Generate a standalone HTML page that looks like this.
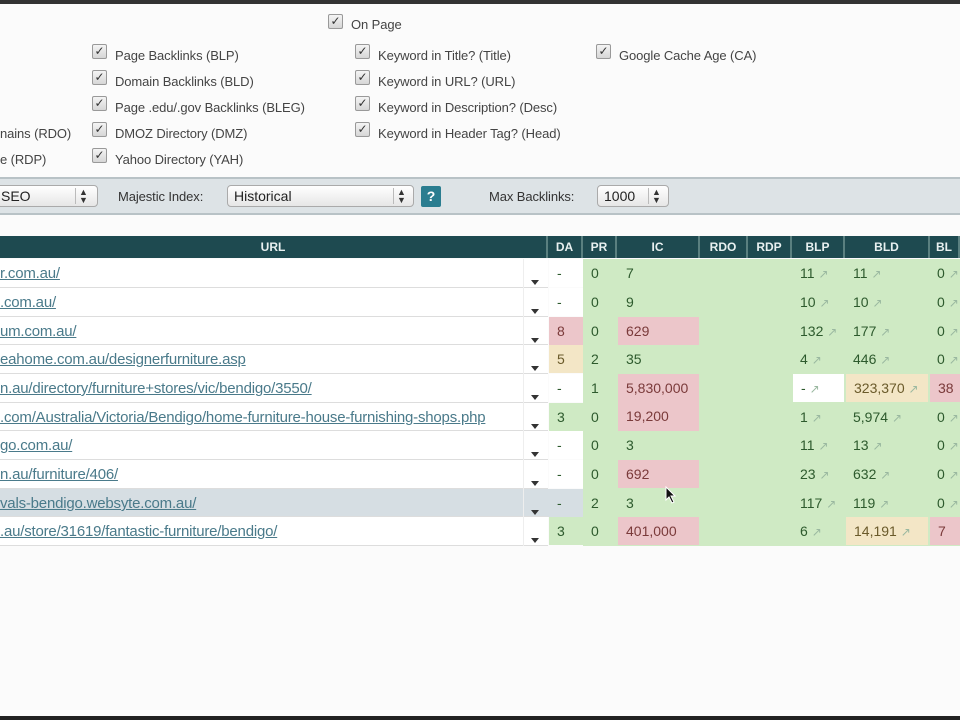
<!DOCTYPE html>
<html><head><meta charset="utf-8"><style>
*{margin:0;padding:0;box-sizing:border-box}
body{width:960px;height:720px;overflow:hidden;background:#fbfbfb;font-family:"Liberation Sans",sans-serif;position:relative;color:#333}
.a{position:absolute;white-space:nowrap}
.cb{position:absolute;width:15px;height:15px;border:1px solid #999;border-radius:2px;background:linear-gradient(#f4f4f4,#d6d6d6);font-size:12px;line-height:13px;text-align:center;color:#333}
.lb{position:absolute;font-size:13px;color:#444;white-space:nowrap;letter-spacing:-0.1px}
.c{position:absolute;height:28px;font-size:14px;line-height:28px;padding-left:8px;color:#2d5a2d;white-space:nowrap}
.c i{font-style:normal;color:#9ab8a0;font-size:12px}
.h{position:absolute;top:236px;height:22px;background:#1e4a50;color:#e8f0f0;font-weight:bold;font-size:12px;line-height:22px;text-align:center;border-right:2px solid #5a8080}
.u{color:#4a7a8a;text-decoration:underline;font-size:15px;letter-spacing:-0.2px}
.ar{position:absolute;left:531px;width:0;height:0;border-left:4px solid transparent;border-right:4px solid transparent;border-top:5px solid #333}
.g{background:#cfeac4}.p{background:#ecc6ca}.y{background:#f3e6c6}.w{background:#fff}
.sel{position:absolute;top:185px;height:22px;border:1px solid #aaa;border-radius:4px;background:linear-gradient(#fff,#e6e6e6);font-size:14px;line-height:20px;padding-left:6px;color:#222}
.sp{position:absolute;top:2px;width:16px;height:16px;border-left:1px solid #bbb;font-size:9px;line-height:8px;text-align:center;color:#333}
</style></head><body>
<div class="a" style="left:0;top:0;width:960px;height:4px;background:#333"></div>
<div class="a" style="left:0;top:716px;width:960px;height:4px;background:#222"></div>

<div class="cb" style="left:328px;top:14px">✓</div><div class="lb" style="left:351px;top:17px">On Page</div>
<div class="cb" style="left:92px;top:44px">✓</div><div class="lb" style="left:115px;top:48px">Page Backlinks (BLP)</div>
<div class="cb" style="left:92px;top:70px">✓</div><div class="lb" style="left:115px;top:74px">Domain Backlinks (BLD)</div>
<div class="cb" style="left:92px;top:96px">✓</div><div class="lb" style="left:115px;top:100px">Page .edu/.gov Backlinks (BLEG)</div>
<div class="cb" style="left:92px;top:122px">✓</div><div class="lb" style="left:115px;top:126px">DMOZ Directory (DMZ)</div>
<div class="cb" style="left:92px;top:148px">✓</div><div class="lb" style="left:115px;top:152px">Yahoo Directory (YAH)</div>
<div class="lb" style="left:0;top:126px">nains (RDO)</div>
<div class="lb" style="left:0;top:152px">e (RDP)</div>
<div class="cb" style="left:355px;top:44px">✓</div><div class="lb" style="left:378px;top:48px">Keyword in Title? (Title)</div>
<div class="cb" style="left:355px;top:70px">✓</div><div class="lb" style="left:378px;top:74px">Keyword in URL? (URL)</div>
<div class="cb" style="left:355px;top:96px">✓</div><div class="lb" style="left:378px;top:100px">Keyword in Description? (Desc)</div>
<div class="cb" style="left:355px;top:122px">✓</div><div class="lb" style="left:378px;top:126px">Keyword in Header Tag? (Head)</div>
<div class="cb" style="left:596px;top:44px">✓</div><div class="lb" style="left:619px;top:48px">Google Cache Age (CA)</div>

<div class="a" style="left:0;top:177px;width:960px;height:38px;background:#dde3e6;border-top:2px solid #b8c2c6;border-bottom:2px solid #b8c2c6"></div>
<div class="sel" style="left:-6px;width:104px">SEO<div class="sp" style="left:80px">▲<br>▼</div></div>
<div class="lb" style="left:118px;top:189px;color:#333">Majestic Index:</div>
<div class="sel" style="left:227px;width:187px">Historical<div class="sp" style="left:165px">▲<br>▼</div></div>
<div class="a" style="left:421px;top:186px;width:20px;height:21px;background:#2a7d90;border-radius:2px;color:#fff;font-weight:bold;font-size:14px;text-align:center;line-height:21px">?</div>
<div class="lb" style="left:489px;top:189px;color:#333">Max Backlinks:</div>
<div class="sel" style="left:597px;width:72px">1000<div class="sp" style="left:50px">▲<br>▼</div></div>

<div class="h" style="left:0;width:548px">URL</div>
<div class="h" style="left:548px;width:35px">DA</div>
<div class="h" style="left:583px;width:34px">PR</div>
<div class="h" style="left:617px;width:83px">IC</div>
<div class="h" style="left:700px;width:48px">RDO</div>
<div class="h" style="left:748px;width:44px">RDP</div>
<div class="h" style="left:792px;width:53px">BLP</div>
<div class="h" style="left:845px;width:85px">BLD</div>
<div class="h" style="left:930px;width:30px;text-align:left;padding-left:6px">BL</div>

<div class="a g" style="left:583px;top:259px;width:377px;height:287px"></div>
<div class="a w" style="left:0;top:259px;width:548px;height:287px"></div>
<div class="a" style="left:0;top:489px;width:583px;height:28px;background:#d6dee3"></div>

<div class="a" style="left:0;top:287px;width:548px;height:1px;background:#ddd"></div>
<div class="a" style="left:0;top:316px;width:548px;height:1px;background:#ddd"></div>
<div class="a" style="left:0;top:344px;width:548px;height:1px;background:#ddd"></div>
<div class="a" style="left:0;top:373px;width:548px;height:1px;background:#ddd"></div>
<div class="a" style="left:0;top:402px;width:548px;height:1px;background:#ddd"></div>
<div class="a" style="left:0;top:430px;width:548px;height:1px;background:#ddd"></div>
<div class="a" style="left:0;top:459px;width:548px;height:1px;background:#ddd"></div>
<div class="a" style="left:0;top:488px;width:548px;height:1px;background:#ddd"></div>
<div class="a" style="left:0;top:516px;width:548px;height:1px;background:#ddd"></div>
<div class="a" style="left:0;top:545px;width:548px;height:1px;background:#ddd"></div>
<div class="a" style="left:523px;top:259px;width:1px;height:287px;background:#eee"></div>

<div class="c" style="left:0;top:259px;padding-left:0"><span class="u">r.com.au/</span></div>
<div class="c" style="left:0;top:288px;padding-left:0"><span class="u">.com.au/</span></div>
<div class="c" style="left:0;top:317px;padding-left:0"><span class="u">um.com.au/</span></div>
<div class="c" style="left:0;top:345px;padding-left:0"><span class="u">eahome.com.au/designerfurniture.asp</span></div>
<div class="c" style="left:0;top:374px;padding-left:0"><span class="u">n.au/directory/furniture+stores/vic/bendigo/3550/</span></div>
<div class="c" style="left:0;top:403px;padding-left:0"><span class="u">.com/Australia/Victoria/Bendigo/home-furniture-house-furnishing-shops.php</span></div>
<div class="c" style="left:0;top:431px;padding-left:0"><span class="u">go.com.au/</span></div>
<div class="c" style="left:0;top:460px;padding-left:0"><span class="u">n.au/furniture/406/</span></div>
<div class="c" style="left:0;top:489px;padding-left:0"><span class="u">vals-bendigo.websyte.com.au/</span></div>
<div class="c" style="left:0;top:517px;padding-left:0"><span class="u">.au/store/31619/fantastic-furniture/bendigo/</span></div>

<div class="ar" style="top:280px"></div><div class="ar" style="top:309px"></div><div class="ar" style="top:338px"></div><div class="ar" style="top:366px"></div><div class="ar" style="top:395px"></div><div class="ar" style="top:424px"></div><div class="ar" style="top:452px"></div><div class="ar" style="top:481px"></div><div class="ar" style="top:510px"></div><div class="ar" style="top:538px"></div>

<div class="c w" style="left:549px;top:259px;width:34px">-</div>
<div class="c w" style="left:549px;top:288px;width:34px">-</div>
<div class="c p" style="left:549px;top:317px;width:34px;color:#7a3a3a">8</div>
<div class="c y" style="left:549px;top:345px;width:34px;color:#6a5a2a">5</div>
<div class="c w" style="left:549px;top:374px;width:34px">-</div>
<div class="c g" style="left:549px;top:403px;width:34px">3</div>
<div class="c w" style="left:549px;top:431px;width:34px">-</div>
<div class="c w" style="left:549px;top:460px;width:34px">-</div>
<div class="c" style="left:549px;top:489px;width:34px">-</div>
<div class="c g" style="left:549px;top:517px;width:34px">3</div>

<div class="c" style="left:583px;top:259px">0</div><div class="c" style="left:583px;top:288px">0</div><div class="c" style="left:583px;top:317px">0</div><div class="c" style="left:583px;top:345px">2</div><div class="c" style="left:583px;top:374px">1</div><div class="c" style="left:583px;top:403px">0</div><div class="c" style="left:583px;top:431px">0</div><div class="c" style="left:583px;top:460px">0</div><div class="c" style="left:583px;top:489px">2</div><div class="c" style="left:583px;top:517px">0</div>

<div class="c" style="left:618px;top:259px">7</div>
<div class="c" style="left:618px;top:288px">9</div>
<div class="c p" style="left:618px;top:317px;width:81px;color:#7a3a3a">629</div>
<div class="c" style="left:618px;top:345px">35</div>
<div class="c p" style="left:618px;top:374px;width:81px;height:57px;color:#7a3a3a">5,830,000<br>19,200</div>
<div class="c" style="left:618px;top:431px">3</div>
<div class="c p" style="left:618px;top:460px;width:81px;color:#7a3a3a">692</div>
<div class="c" style="left:618px;top:489px">3</div>
<div class="c p" style="left:618px;top:517px;width:81px;color:#7a3a3a">401,000</div>

<div class="c" style="left:792px;top:259px">11 <i>↗</i></div>
<div class="c" style="left:792px;top:288px">10 <i>↗</i></div>
<div class="c" style="left:792px;top:317px">132 <i>↗</i></div>
<div class="c" style="left:792px;top:345px">4 <i>↗</i></div>
<div class="c w" style="left:793px;top:374px;width:51px">- <i>↗</i></div>
<div class="c" style="left:792px;top:403px">1 <i>↗</i></div>
<div class="c" style="left:792px;top:431px">11 <i>↗</i></div>
<div class="c" style="left:792px;top:460px">23 <i>↗</i></div>
<div class="c" style="left:792px;top:489px">117 <i>↗</i></div>
<div class="c" style="left:792px;top:517px">6 <i>↗</i></div>

<div class="c" style="left:845px;top:259px">11 <i>↗</i></div>
<div class="c" style="left:845px;top:288px">10 <i>↗</i></div>
<div class="c" style="left:845px;top:317px">177 <i>↗</i></div>
<div class="c" style="left:845px;top:345px">446 <i>↗</i></div>
<div class="c y" style="left:846px;top:374px;width:82px;color:#6a5a2a">323,370 <i>↗</i></div>
<div class="c" style="left:845px;top:403px">5,974 <i>↗</i></div>
<div class="c" style="left:845px;top:431px">13 <i>↗</i></div>
<div class="c" style="left:845px;top:460px">632 <i>↗</i></div>
<div class="c" style="left:845px;top:489px">119 <i>↗</i></div>
<div class="c y" style="left:846px;top:517px;width:82px;color:#6a5a2a">14,191 <i>↗</i></div>

<div class="c" style="left:929px;top:259px">0 <i>↗</i></div>
<div class="c" style="left:929px;top:288px">0 <i>↗</i></div>
<div class="c" style="left:929px;top:317px">0 <i>↗</i></div>
<div class="c" style="left:929px;top:345px">0 <i>↗</i></div>
<div class="c p" style="left:930px;top:374px;width:30px;color:#7a3a3a">38</div>
<div class="c" style="left:929px;top:403px">0 <i>↗</i></div>
<div class="c" style="left:929px;top:431px">0 <i>↗</i></div>
<div class="c" style="left:929px;top:460px">0 <i>↗</i></div>
<div class="c" style="left:929px;top:489px">0 <i>↗</i></div>
<div class="c p" style="left:930px;top:517px;width:30px;color:#7a3a3a">7</div>
<svg class="a" style="left:665px;top:486px" width="12" height="18" viewBox="0 0 12 18"><path d="M1 1 L1 14 L4 11 L7 17 L9 16 L6 10 L10 10 Z" fill="#111" stroke="#fff" stroke-width="1"/></svg>
</body></html>
